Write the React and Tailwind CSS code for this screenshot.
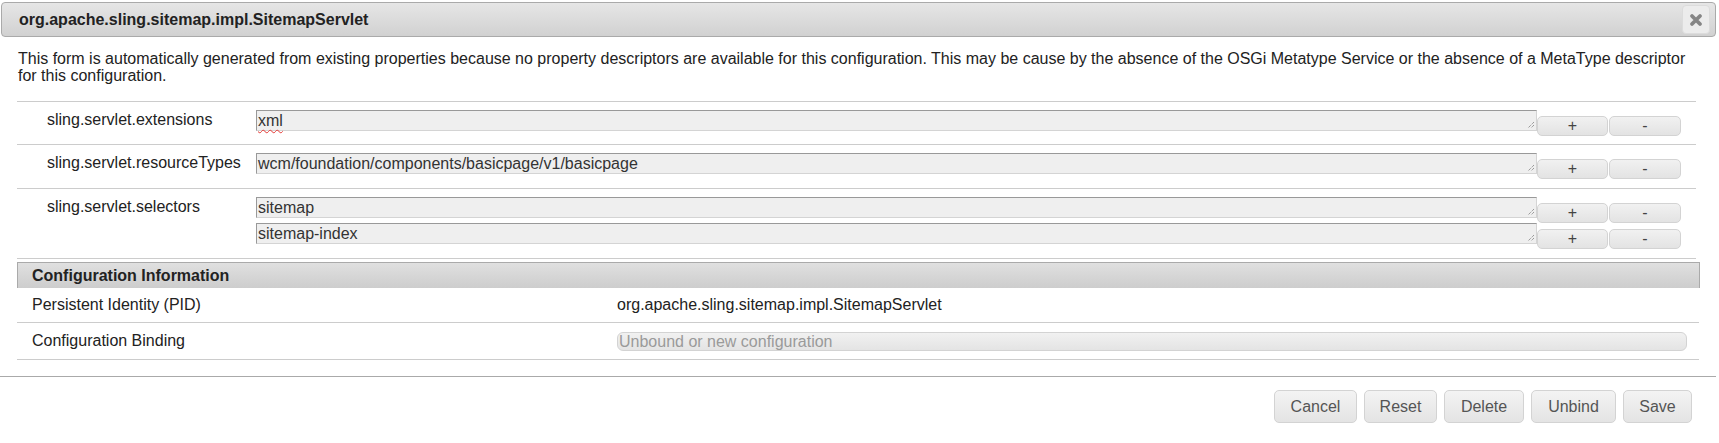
import React from 'react';

const props = [
  { name: 'sling.servlet.extensions', values: ['xml'] },
  { name: 'sling.servlet.resourceTypes', values: ['wcm/foundation/components/basicpage/v1/basicpage'] },
  { name: 'sling.servlet.selectors', values: ['sitemap', 'sitemap-index'] },
];

const Grip = () => (
  <svg className="absolute right-[1px] bottom-[1px]" width="8" height="8" viewBox="0 0 8 8">
    <path d="M7 1 L1 7 M7 4 L4 7" stroke="#777" strokeWidth="1" strokeDasharray="1 1" />
  </svg>
);

const SmallButton = ({ children, w }) => (
  <button
    className={`${w} h-[20px] mt-[6px] rounded-[5px] border border-[#d3d3d3] bg-linear-to-b from-[#f1f1f1] to-[#e3e3e3] text-[#444] text-[16px] leading-none flex items-center justify-center`}
  >
    {children}
  </button>
);

const ValueLine = ({ value }) => (
  <div className="flex items-start">
    <div className="relative w-[1281px] h-[21px] bg-[#efefef] border-t border-l border-[#999] border-r border-b border-r-[#d4d4d4] border-b-[#d4d4d4] pl-[1px] text-[16px] leading-[19px] text-[#333]">
      {value === 'xml' ? (
        <span className="underline decoration-wavy decoration-[#e53935] underline-offset-[3px] decoration-1">xml</span>
      ) : (
        value
      )}
      <Grip />
    </div>
    <SmallButton w="w-[71px]">+</SmallButton>
    <div className="w-[1px]" />
    <SmallButton w="w-[72px]">-</SmallButton>
  </div>
);

const FooterButton = ({ children, w }) => (
  <button
    className={`${w} h-[33px] rounded-[5px] border border-[#d3d3d3] bg-linear-to-b from-[#f3f3f3] to-[#e4e4e4] text-[#555] text-[16px]`}
  >
    {children}
  </button>
);

export default function App() {
  return (
    <div className="w-[1719px] h-[443px] bg-white overflow-hidden font-['Liberation_Sans',Arial,sans-serif] text-[#222]">
      {/* dialog title */}
      <div className="ml-[1px] mt-[2px] w-[1715px] h-[35px] rounded-[4px] border border-[#aaa] bg-linear-to-b from-[#e6e6e6] to-[#d1d1d1] flex items-center justify-between pl-[17px] pr-[5px]">
        <span className="font-bold text-[16px] text-[#222]">org.apache.sling.sitemap.impl.SitemapServlet</span>
        <button className="w-[28px] h-[29px] rounded-[4px] border border-[#dcdcdc] bg-[#ececec] flex items-center justify-center">
          <svg width="14" height="14" viewBox="0 0 14 14">
            <path d="M3 3 L11 11 M11 3 L3 11" stroke="#858585" strokeWidth="3.8" strokeLinecap="round" />
          </svg>
        </button>
      </div>

      <p className="ml-[18px] mt-[13px] text-[16px] leading-[17px] text-[#222]">
        This form is automatically generated from existing properties because no property descriptors are available for this configuration. This may be cause by the absence of the OSGi Metatype Service or the absence of a MetaType descriptor
        <br />
        for this configuration.
      </p>

      {/* property rows */}
      <div className="ml-[17px] mt-[17px] w-[1679px] border-b border-[#ccc]">
        {props.map((p, i) => (
          <div key={p.name} className={`flex border-t border-[#ccc] pt-[8px] ${i === 0 ? 'pb-[8px]' : 'pb-[9px]'}`}>
            <div className="w-[239px] pl-[30px] text-[16px] leading-[20px] text-[#222]">{p.name}</div>
            <div className="flex flex-col">
              {p.values.map((v) => (
                <ValueLine key={v} value={v} />
              ))}
            </div>
          </div>
        ))}
      </div>

      {/* configuration information */}
      <div className="ml-[17px] mt-[3px] w-[1683px] h-[26px] border-x border-t border-[#aaa] bg-linear-to-b from-[#e0e0e0] to-[#cdcdcd] pl-[14px] flex items-center">
        <span className="font-bold text-[16px] text-[#222]">Configuration Information</span>
      </div>
      <div className="ml-[17px] w-[1682px] text-[16px] text-[#222]">
        <div className="flex items-center h-[35px] border-b border-[#ccc]">
          <div className="w-[600px] pl-[15px]">Persistent Identity (PID)</div>
          <div>org.apache.sling.sitemap.impl.SitemapServlet</div>
        </div>
        <div className="flex items-center h-[37px] border-b border-[#ccc]">
          <div className="w-[600px] pl-[15px]">Configuration Binding</div>
          <div className="w-[1070px] h-[19px] rounded-[6px] border border-[#d3d3d3] bg-linear-to-b from-[#f1f1f1] to-[#e4e4e4] text-[#9a9a9a] leading-[17px] pl-[1px]">
            Unbound or new configuration
          </div>
        </div>
      </div>

      {/* dialog buttons */}
      <div className="mt-[16px] w-[1716px] border-t border-[#aaa] pt-[13px] pr-[24px] flex justify-end gap-[7px]">
        <FooterButton w="w-[83px]">Cancel</FooterButton>
        <FooterButton w="w-[73px]">Reset</FooterButton>
        <FooterButton w="w-[80px]">Delete</FooterButton>
        <FooterButton w="w-[85px]">Unbind</FooterButton>
        <FooterButton w="w-[69px]">Save</FooterButton>
      </div>
    </div>
  );
}
